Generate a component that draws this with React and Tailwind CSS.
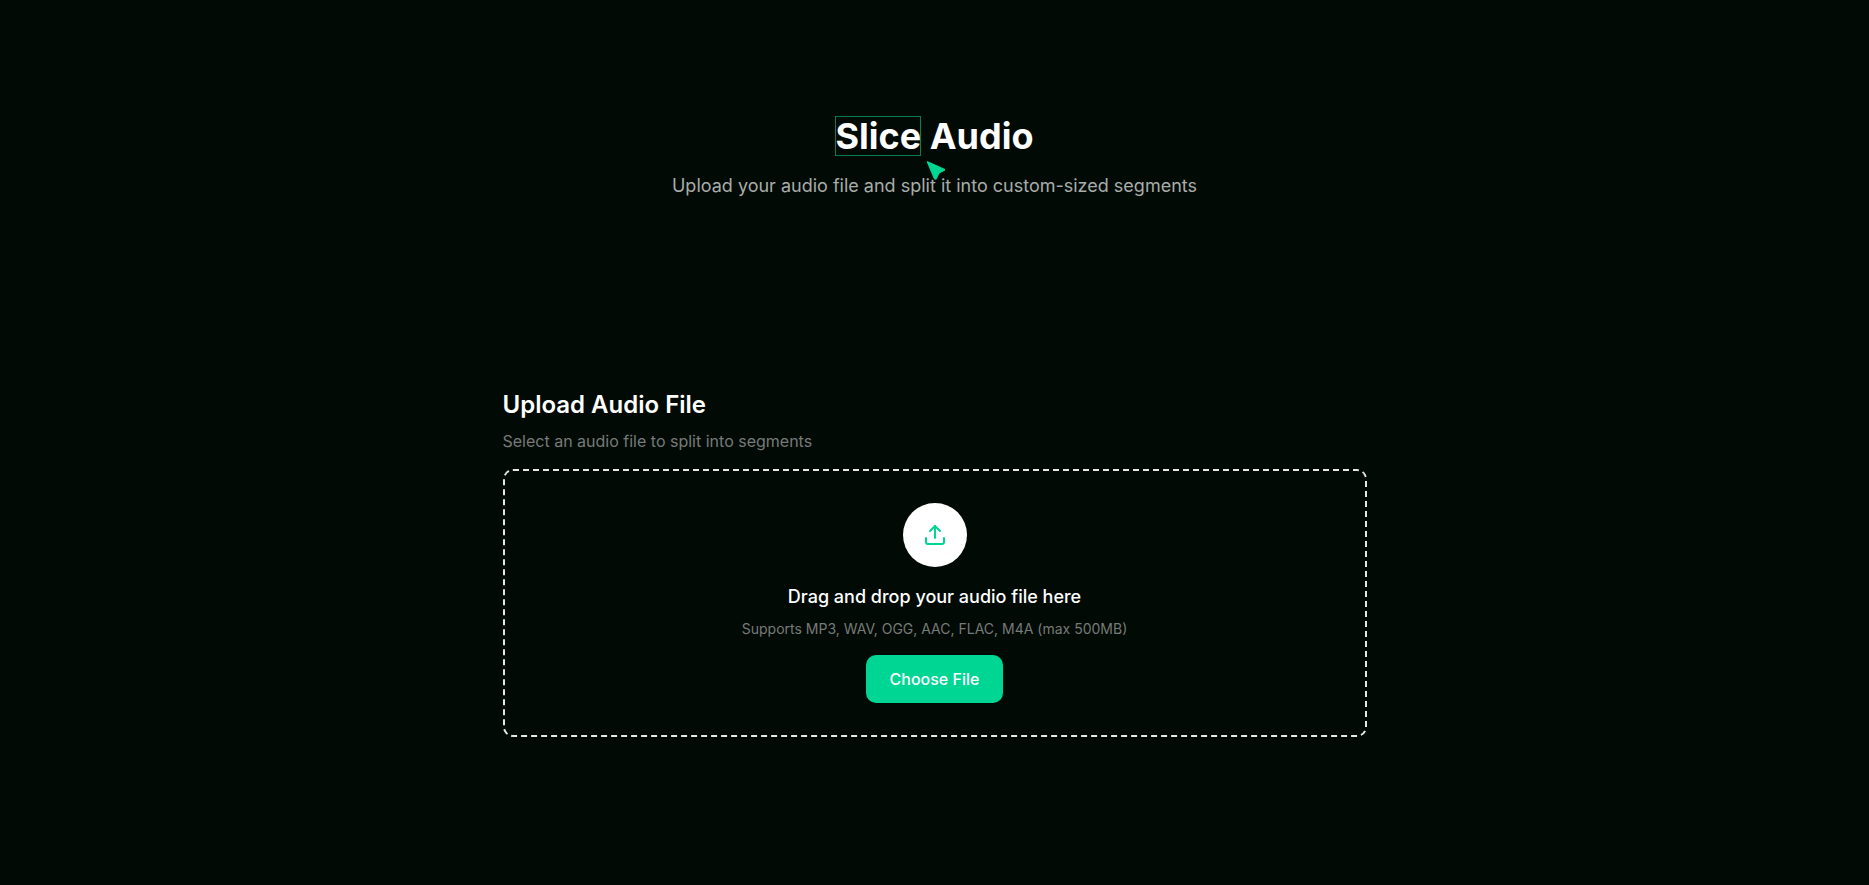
import React, { useRef } from "react";

function Cursor() {
  return (
    <svg
      className="pointer-events-none absolute left-full top-full ml-1 mt-1 h-5 w-5"
      viewBox="0 0 20 20"
      fill="#00d694"
      stroke="#00d694"
      strokeLinejoin="round"
      aria-hidden="true"
    >
      <path d="M2.5 2 19.3 9.4Q19.8 9.9 19.2 10.2L14 12.8 11.1 18.8Q10.2 19.5 9.5 18.6Z" strokeWidth="1.4" />
    </svg>
  );
}

function UploadIcon() {
  return (
    <svg
      className="h-6 w-6"
      viewBox="0 0 24 24"
      fill="none"
      stroke="#00d694"
      strokeWidth="2"
      strokeLinecap="round"
      strokeLinejoin="round"
      aria-hidden="true"
    >
      <path d="M12 3v12" />
      <path d="m17 8-5-5-5 5" />
      <path d="M21 15v4a2 2 0 0 1-2 2H5a2 2 0 0 1-2-2v-4" />
    </svg>
  );
}

export default function App() {
  const input = useRef(null);
  return (
    <div className="min-h-screen bg-[#010a05] px-4 pt-29 pb-16 font-['Inter',sans-serif] text-white">
      <header className="text-center">
        <h1 className="text-4xl font-bold">
          <span className="relative inline-block outline-1 -outline-offset-1 outline-[#077f51]">
            Slice
            <Cursor />
          </span>{" "}
          Audio
        </h1>
        <p className="mt-4 text-lg text-[#a8aca9]">
          Upload your audio file and split it into custom-sized segments
        </p>
      </header>

      <main className="mx-auto mt-[189px] max-w-[864px]">
        <h2 className="text-2xl font-semibold">Upload Audio File</h2>
        <p className="mt-2 text-base text-[#777a78]">Select an audio file to split into segments</p>
        <section className="mt-4 flex flex-col items-center rounded-[10px] border-2 border-dashed border-[#e5e7e5] p-8">
          <div className="flex h-16 w-16 items-center justify-center rounded-full bg-white">
            <UploadIcon />
          </div>
          <h3 className="mt-4 text-lg font-medium">Drag and drop your audio file here</h3>
          <p className="mt-2 text-sm text-[#777a78]">
            Supports MP3, WAV, OGG, AAC, FLAC, M4A (max 500MB)
          </p>
          <input ref={input} type="file" accept="audio/*" aria-label="Audio file" className="hidden" />
          <button
            type="button"
            onClick={() => input.current.click()}
            className="mt-4 rounded-[10px] bg-[#00d694] px-6 py-3 text-base font-medium"
          >
            Choose File
          </button>
        </section>
      </main>
    </div>
  );
}
